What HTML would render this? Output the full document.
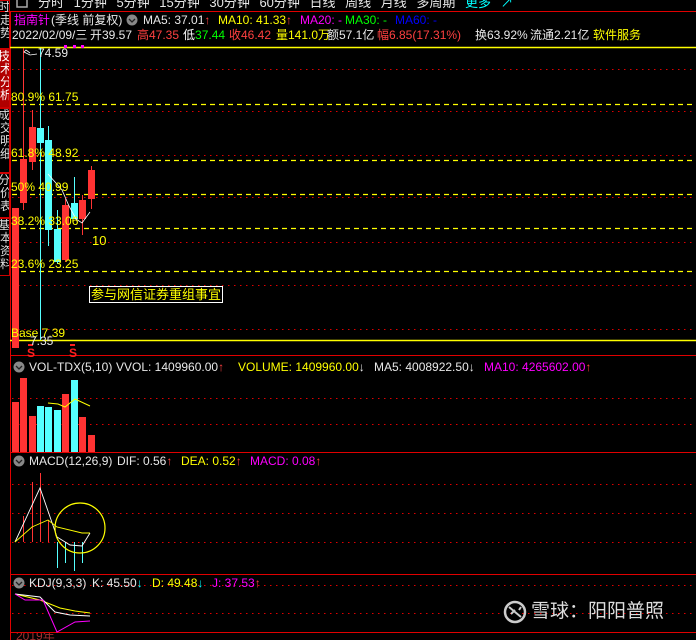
<!DOCTYPE html>
<html><head><meta charset="utf-8"><style>
html,body{margin:0;background:#000;width:696px;height:640px;overflow:hidden;}
body{position:relative;font-family:"Liberation Sans","Noto Sans CJK SC",sans-serif;}
.t{position:absolute;font-size:12px;line-height:14px;white-space:nowrap;}
.w{color:#e8e8e8}.y{color:#ffff00}.m{color:#ff00ff}.g{color:#00ff00}.b{color:#0000ff}.r{color:#ff4040}.c{color:#00ffff}
.tab{position:absolute;left:0;width:9px;border:1px solid #c00;border-left:none;color:#ddd;font-size:12px;line-height:13px;overflow:hidden;text-align:left;text-indent:-2px;}
</style></head><body>
<svg width="696" height="640" style="position:absolute;left:0;top:0" xmlns="http://www.w3.org/2000/svg">
<line x1="0" y1="11.5" x2="696" y2="11.5" stroke="#e00000"/>
<line x1="10.5" y1="11" x2="10.5" y2="640" stroke="#e00000"/>
<line x1="10" y1="47.5" x2="696" y2="47.5" stroke="#ffff00" stroke-width="1.5"/>
<line x1="10" y1="340.5" x2="696" y2="340.5" stroke="#ffff00" stroke-width="1.5"/>
<line x1="10" y1="355.5" x2="696" y2="355.5" stroke="#e00000"/>
<line x1="10" y1="452.5" x2="696" y2="452.5" stroke="#e00000"/>
<line x1="10" y1="574.5" x2="696" y2="574.5" stroke="#e00000"/>
<line x1="10" y1="632.5" x2="696" y2="632.5" stroke="#e00000"/>
<g stroke="#e00000" stroke-dasharray="1.5 4.5">
<line x1="12" y1="69.5" x2="696" y2="69.5"/><line x1="12" y1="111.5" x2="696" y2="111.5"/>
<line x1="12" y1="155.5" x2="696" y2="155.5"/><line x1="12" y1="197.5" x2="696" y2="197.5"/>
<line x1="12" y1="242.5" x2="696" y2="242.5"/><line x1="12" y1="285.5" x2="696" y2="285.5"/>
<line x1="12" y1="329.5" x2="696" y2="329.5"/>
<line x1="12" y1="398.5" x2="696" y2="398.5"/><line x1="12" y1="424.5" x2="696" y2="424.5"/>
<line x1="12" y1="484.5" x2="696" y2="484.5"/><line x1="12" y1="513.5" x2="696" y2="513.5"/><line x1="12" y1="542.5" x2="696" y2="542.5"/>
<line x1="12" y1="585.5" x2="696" y2="585.5"/><line x1="12" y1="613.5" x2="696" y2="613.5"/>
</g>
<g stroke="#ffff00" stroke-dasharray="5 4" stroke-width="1.2">
<line x1="12" y1="104.5" x2="696" y2="104.5"/><line x1="12" y1="160.5" x2="696" y2="160.5"/>
<line x1="12" y1="194.5" x2="696" y2="194.5"/><line x1="12" y1="228.5" x2="696" y2="228.5"/>
<line x1="12" y1="271.5" x2="696" y2="271.5"/>
</g>
<g fill="#ff3333" stroke="#ff3333">
<rect x="12" y="208" width="7" height="140" stroke="none"/>
<line x1="23.5" y1="48" x2="23.5" y2="210"/><rect x="20" y="159" width="7" height="44" stroke="none"/>
<line x1="32.5" y1="110" x2="32.5" y2="170"/><rect x="29" y="127" width="7" height="35" stroke="none"/>
<line x1="65.5" y1="199" x2="65.5" y2="262"/><rect x="62" y="205" width="7" height="55" stroke="none"/>
<line x1="82.5" y1="195" x2="82.5" y2="235"/><rect x="79" y="200" width="7" height="19" stroke="none"/>
<line x1="91.5" y1="166" x2="91.5" y2="209"/><rect x="88" y="170" width="7" height="29" stroke="none"/>
</g>
<g fill="#55ffff" stroke="#55ffff">
<line x1="40.5" y1="48" x2="40.5" y2="340"/><rect x="37" y="128" width="7" height="15" stroke="none"/>
<line x1="48.5" y1="126" x2="48.5" y2="246"/><rect x="45" y="140" width="7" height="90" stroke="none"/>
<line x1="57.5" y1="210" x2="57.5" y2="264"/><rect x="54" y="229" width="7" height="33" stroke="none"/>
<line x1="74.5" y1="177" x2="74.5" y2="219"/><rect x="71" y="203" width="7" height="16" stroke="none"/>
</g>
<polyline points="48,174 62,190 69,206 76,219 82,223 90,212" fill="none" stroke="#fff" stroke-width="0.8"/>
<polyline points="30,53 26,50 24,52 30,55 37,54" fill="none" stroke="#fff" stroke-width="0.8"/>
<rect x="64" y="45" width="3" height="3" fill="#ff00ff"/><rect x="73" y="45" width="3" height="3" fill="#ff00ff"/><rect x="81" y="45" width="3" height="3" fill="#ff00ff"/>
<text x="27" y="357" fill="#ff2020" font-size="12" font-weight="bold" font-family="Liberation Sans">S</text>
<text x="69" y="357" fill="#ff2020" font-size="12" font-weight="bold" font-family="Liberation Sans">S</text>
<rect x="28" y="344" width="5" height="2" fill="#ff2020"/><rect x="70" y="344" width="5" height="2" fill="#ff2020"/>
<g fill="#ff3333"><rect x="12" y="402" width="7" height="50"/><rect x="20" y="378" width="7" height="74"/><rect x="29" y="416" width="7" height="36"/><rect x="62" y="394" width="7" height="58"/><rect x="79" y="417" width="7" height="35"/><rect x="88" y="435" width="7" height="17"/></g>
<g fill="#55ffff"><rect x="37" y="406" width="7" height="46"/><rect x="45" y="407" width="7" height="45"/><rect x="54" y="410" width="7" height="42"/><rect x="71" y="380" width="7" height="72"/></g>
<polyline points="48,403 58,404 65,407 75,399 90,406" fill="none" stroke="#ffff00"/>
<g stroke="#ff3333"><line x1="23.5" y1="516" x2="23.5" y2="542"/><line x1="32.5" y1="482" x2="32.5" y2="542"/><line x1="40.5" y1="473" x2="40.5" y2="542"/><line x1="48.5" y1="520" x2="48.5" y2="542"/></g>
<g stroke="#55ffff"><line x1="57.5" y1="542" x2="57.5" y2="568"/><line x1="65.5" y1="542" x2="65.5" y2="563"/><line x1="74.5" y1="542" x2="74.5" y2="571"/><line x1="82.5" y1="542" x2="82.5" y2="563"/></g>
<polyline points="15,542 40,488 57,537 70,545 82,546 90,533" fill="none" stroke="#fff" stroke-width="0.9"/>
<polyline points="15,542 32,527 48,520 57,527 82,533 90,533" fill="none" stroke="#ffff00" stroke-width="0.9"/>
<circle cx="80" cy="528" r="25" fill="none" stroke="#ffff00" stroke-width="1.2"/>
<polyline points="15,594 40,600 60,608 75,611 90,613" fill="none" stroke="#ffff00"/>
<polyline points="15,594 40,597 55,612 70,615 90,616" fill="none" stroke="#fff"/>
<polyline points="15,594 25,600 43,600 57,632 75,622 90,621" fill="none" stroke="#ff00ff"/>
<g fill="#888"><circle cx="19" cy="367" r="5.5"/><circle cx="19" cy="461" r="5.5"/><circle cx="19" cy="583" r="5.5"/><circle cx="132" cy="20" r="5.5"/></g>
<g fill="none" stroke="#222" stroke-width="1.3"><polyline points="16,366 19,369 22,366"/><polyline points="16,460 19,463 22,460"/><polyline points="16,582 19,585 22,582"/><polyline points="129,19 132,22 135,19"/></g>
<rect x="17" y="-3" width="10" height="10" fill="none" stroke="#aaa" stroke-width="1.5"/>
<circle cx="515" cy="612" r="10" fill="none" stroke="#ccc" stroke-width="2.5"/>
<path d="M509 607 L521 617 M511 614 L515 610 M519 610 L521 607" stroke="#ccc" stroke-width="2" fill="none"/>
</svg>
<div class="tab" style="top:0;height:47px;">时走势</div>
<div class="tab" style="top:49px;height:57px;background:#b00000;color:#fff;">技术分析</div>
<div class="tab" style="top:108px;height:63px;">成交明细</div>
<div class="tab" style="top:173px;height:43px;">分价表</div>
<div class="tab" style="top:218px;height:56px;">基本资料</div>
<div class="t w" style="left:38px;top:-4px;font-size:13px;word-spacing:6px;">分时 1分钟 5分钟 15分钟 30分钟 60分钟 日线 周线 月线 多周期 <span class="c">更多 ↗</span></div>
<div class="t m" style="left:14px;top:13px;">指南针</div>
<div class="t w" style="left:51px;top:13px;">(季线 前复权)</div>
<div class="t w" style="left:143px;top:13px;">MA5: 37.01<span class="r">↑</span></div>
<div class="t y" style="left:218px;top:13px;">MA10: 41.33<span class="r">↑</span></div>
<div class="t m" style="left:300px;top:13px;">MA20: -</div>
<div class="t g" style="left:345px;top:13px;">MA30: -</div>
<div class="t b" style="left:395px;top:13px;">MA60: -</div>
<div class="t w" style="left:12px;top:28px;">2022/02/09/三</div>
<div class="t w" style="left:90px;top:28px;">开39.57</div>
<div class="t r" style="left:137px;top:28px;">高47.35</div>
<div class="t" style="left:183px;top:28px;color:#fff"><span>低</span><span class="g">37.44</span></div>
<div class="t r" style="left:229px;top:28px;">收46.42</div>
<div class="t y" style="left:276px;top:28px;">量141.0万</div>
<div class="t w" style="left:327px;top:28px;">额57.1亿</div>
<div class="t r" style="left:377px;top:28px;">幅6.85(17.31%)</div>
<div class="t w" style="left:475px;top:28px;">换63.92%</div>
<div class="t w" style="left:530px;top:28px;">流通2.21亿</div>
<div class="t y" style="left:593px;top:28px;">软件服务</div>
<div class="t w" style="left:38px;top:46px;">74.59</div>
<div class="t y" style="left:11px;top:90px;">80.9% 61.75</div>
<div class="t y" style="left:11px;top:146px;">61.8% 48.92</div>
<div class="t y" style="left:11px;top:180px;">50% 40.99</div>
<div class="t y" style="left:11px;top:214px;">38.2% 33.06</div>
<div class="t y" style="left:11px;top:257px;">23.6% 23.25</div>
<div class="t y" style="left:11px;top:326px;">Base 7.39</div>
<div class="t w" style="left:30px;top:334px;">7.35</div>
<div class="t y" style="left:92px;top:234px;font-size:13px;">10</div>
<div class="t y" style="left:89px;top:286px;font-size:13px;line-height:15px;border:1px solid #fff;padding:0 1px;">参与网信证券重组事宜</div>
<div class="t w" style="left:29px;top:360px;">VOL-TDX(5,10)</div>
<div class="t w" style="left:116px;top:360px;">VVOL: 1409960.00<span class="r">↑</span></div>
<div class="t y" style="left:238px;top:360px;">VOLUME: 1409960.00<span class="w">↓</span></div>
<div class="t w" style="left:374px;top:360px;">MA5: 4008922.50<span class="w">↓</span></div>
<div class="t m" style="left:484px;top:360px;">MA10: 4265602.00<span class="r">↑</span></div>
<div class="t w" style="left:29px;top:454px;">MACD(12,26,9)</div>
<div class="t w" style="left:117px;top:454px;">DIF: 0.56<span class="r">↑</span></div>
<div class="t y" style="left:181px;top:454px;">DEA: 0.52<span class="r">↑</span></div>
<div class="t m" style="left:250px;top:454px;">MACD: 0.08<span class="r">↑</span></div>
<div class="t w" style="left:29px;top:576px;">KDJ(9,3,3)</div>
<div class="t w" style="left:92px;top:576px;">K: 45.50<span class="c">↓</span></div>
<div class="t y" style="left:152px;top:576px;">D: 49.48<span class="c">↓</span></div>
<div class="t m" style="left:212px;top:576px;">J: 37.53<span class="r">↑</span></div>
<div class="t" style="left:16px;top:633px;color:#a03030;line-height:7px;height:7px;overflow:hidden;">2019年</div>
<div class="t" style="left:531px;top:601px;font-size:19px;line-height:22px;color:#ddd;">雪球：阳阳普照</div>
</body></html>
